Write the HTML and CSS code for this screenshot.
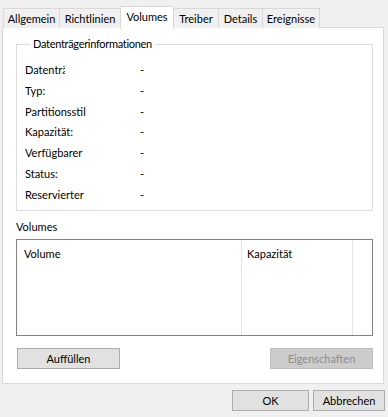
FILE: index.html
```html
<!DOCTYPE html>
<html lang="de">
<head>
    <meta charset="UTF-8">
    <title>Eigenschaften</title>
    <link rel="stylesheet" href="styles.css">
</head>
<body>
    <div class="dialog">
        <div class="tabs">
            <div class="tab tab-allgemein">Allgemein</div>
            <div class="tab tab-richtlinien">Richtlinien</div>
            <div class="tab tab-volumes active">Volumes</div>
            <div class="tab tab-treiber">Treiber</div>
            <div class="tab tab-details">Details</div>
            <div class="tab tab-ereignisse">Ereignisse</div>
        </div>

        <div class="panel">
            <fieldset class="group">
                <legend>Datenträgerinformationen</legend>
                <div class="row"><span class="label clip">Datenträger:</span><span class="value">-</span></div>
                <div class="row"><span class="label">Typ:</span><span class="value">-</span></div>
                <div class="row"><span class="label">Partitionsstil</span><span class="value">-</span></div>
                <div class="row"><span class="label">Kapazität:</span><span class="value">-</span></div>
                <div class="row"><span class="label">Verfügbarer</span><span class="value">-</span></div>
                <div class="row"><span class="label">Status:</span><span class="value">-</span></div>
                <div class="row"><span class="label">Reservierter</span><span class="value">-</span></div>
            </fieldset>

            <div class="list-title">Volumes</div>
            <div class="list">
                <div class="col col-volume">Volume</div>
                <div class="col col-size">Kapazität</div>
                <div class="col col-rest"></div>
            </div>

            <div class="panel-buttons">
                <button class="btn btn-wide">Auffüllen</button>
                <button class="btn btn-wide" disabled>Eigenschaften</button>
            </div>
        </div>

        <div class="footer">
            <button class="btn btn-ok">OK</button>
            <button class="btn btn-cancel">Abbrechen</button>
        </div>
    </div>
</body>
</html>
```

FILE: styles.css
```css
* {
  margin: 0;
  padding: 0;
  box-sizing: border-box;
}

body {
  background: #f0f0f0;
  font-family: Lato, "Liberation Sans", sans-serif;
  font-size: 11px;
  color: #000;
}

.dialog {
  width: 388px;
  height: 417px;
}

.tabs {
  display: flex;
  height: 28px;
  padding: 8px 0 0 3px;
}

.tab {
  height: 20px;
  border: 1px solid #d9d9d9;
  border-bottom: none;
  border-right: none;
  background: #f0f0f0;
  line-height: 19px;
  text-align: center;
  white-space: nowrap;
}

.tab-allgemein { width: 56px; }
.tab-richtlinien { width: 61px; }
.tab-treiber { width: 44px; }
.tab-details { width: 44px; }
.tab-ereignisse { width: 58px; border-right: 1px solid #d9d9d9; }

.tab.active {
  width: 54px;
  height: 23px;
  margin-top: -2px;
  background: #fff;
  border-right: 1px solid #d9d9d9;
  position: relative;
  z-index: 1;
  line-height: 20px;
}

.tab.active + .tab {
  border-left: none;
}

.panel {
  width: 382px;
  height: 357px;
  margin: -1px 0 0 2px;
  background: #fff;
  border: 1px solid #d9d9d9;
  padding: 8px 10px 0 13px;
}

.group {
  width: 357px;
  height: 175px;
  border: 1px solid #dcdcdc;
  padding: 8px 0 0 8px;
}

.group legend {
  margin-left: 5px;
  padding: 0 3px 0 3px;
  line-height: 16px;
  letter-spacing: -0.3px;
}

.row {
  display: flex;
  height: 20.8px;
  line-height: 20px;
}

.label {
  width: 115px;
  white-space: nowrap;
  overflow: hidden;
}

.label.clip {
  width: 40px;
  margin-right: 75px;
}

.list-title {
  margin-top: 8px;
  line-height: 16px;
}

.list {
  display: flex;
  width: 357px;
  height: 97px;
  margin-top: 4px;
  border: 1px solid #828282;
}

.col {
  padding: 6px 0 0 7px;
  line-height: 16px;
  border-right: 1px solid #e5e5e5;
}

.col-volume { width: 225px; }
.col-size { width: 111px; padding-left: 5px; }
.col-rest { flex: 1; border-right: none; }

.panel-buttons {
  display: flex;
  justify-content: space-between;
  width: 357px;
  margin-top: 12px;
  padding-left: 1px;
}

.btn {
  height: 21px;
  background: #e1e1e1;
  border: 1px solid #adadad;
  font-family: inherit;
  font-size: 11px;
  color: #000;
}

.btn-wide { width: 103px; }

.btn:disabled {
  background: #cccccc;
  border-color: #bfbfbf;
  color: #8c8c8c;
}

.footer {
  display: flex;
  justify-content: flex-end;
  gap: 4px;
  padding: 6px 3px 0 0;
}

.btn-ok { width: 77px; }
.btn-cancel { width: 72px; }
```
